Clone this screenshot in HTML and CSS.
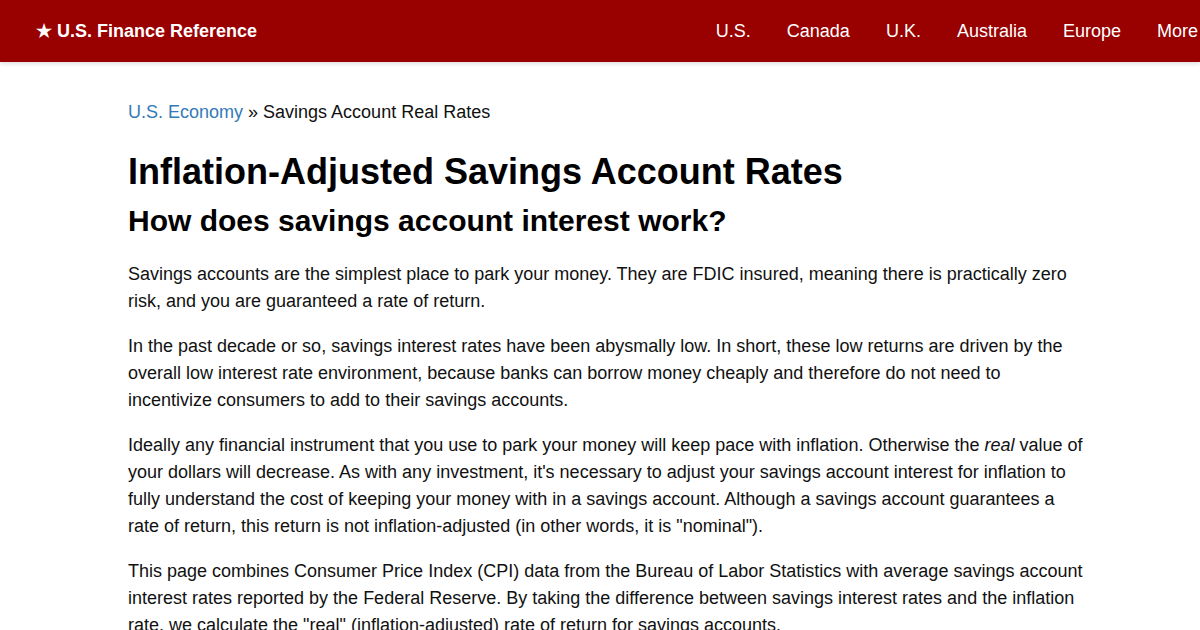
FILE: index.html
```html
<!DOCTYPE html>
<html lang="en">
<head>
<meta charset="utf-8">
<title>Inflation-Adjusted Savings Account Rates</title>
<link rel="stylesheet" href="styles.css">
</head>
<body>
<header class="topbar">
  <a class="brand" href="#">&#9733; U.S. Finance Reference</a>
  <nav class="nav">
    <a href="#">U.S.</a>
    <a href="#">Canada</a>
    <a href="#">U.K.</a>
    <a href="#">Australia</a>
    <a href="#">Europe</a>
    <a href="#">More</a>
  </nav>
</header>
<main class="content">
  <div class="breadcrumb"><a href="#">U.S. Economy</a> &raquo; Savings Account Real Rates</div>
  <h1>Inflation-Adjusted Savings Account Rates</h1>
  <h2>How does savings account interest work?</h2>
  <p>Savings accounts are the simplest place to park your money. They are FDIC insured, meaning there is practically zero risk, and you are guaranteed a rate of return.</p>
  <p>In the past decade or so, savings interest rates have been abysmally low. In short, these low returns are driven by the overall low interest rate environment, because banks can borrow money cheaply and therefore do not need to incentivize consumers to add to their savings accounts.</p>
  <p>Ideally any financial instrument that you use to park your money will keep pace with inflation. Otherwise the <em>real</em> value of your dollars will decrease. As with any investment, it's necessary to adjust your savings account interest for inflation to fully understand the cost of keeping your money with in a savings account. Although a savings account guarantees a rate of return, this return is not inflation-adjusted (in other words, it is "nominal").</p>
  <p>This page combines Consumer Price Index (CPI) data from the Bureau of Labor Statistics with average savings account interest rates reported by the Federal Reserve. By taking the difference between savings interest rates and the inflation rate, we calculate the "real" (inflation-adjusted) rate of return for savings accounts.</p>
</main>
</body>
</html>
```
FILE: styles.css
```css
html, body {
  margin: 0;
  padding: 0;
  overflow: hidden;
}
body {
  font-family: "Liberation Sans", Arial, sans-serif;
  color: #111;
  background: #fff;
  font-size: 18px;
  line-height: 27px;
}
.topbar {
  height: 62px;
  background: #990000;
  display: flex;
  align-items: center;
  padding-left: 36px;
  box-shadow: 0 2px 4px rgba(0,0,0,0.12);
  overflow: hidden;
  position: relative;
}
.brand {
  color: #fff;
  font-weight: bold;
  font-size: 18px;
  text-decoration: none;
  white-space: nowrap;
}
.nav {
  display: flex;
  margin-left: auto;
  margin-right: -16px;
  flex-shrink: 0;
}
.nav a {
  color: #fff;
  text-decoration: none;
  font-size: 18px;
  padding: 0 18px;
  white-space: nowrap;
}
.content {
  width: 960px;
  margin: 0 112px 0 128px;
  padding-top: 37px;
}
.breadcrumb {
  font-size: 18px;
  line-height: 27px;
}
.breadcrumb a {
  color: #337ab7;
  text-decoration: none;
}
h1 {
  font-size: 36px;
  line-height: 40px;
  margin: 26px 0 11px;
  color: #000;
}
h2 {
  font-size: 30px;
  line-height: 36px;
  margin: 0 0 22px;
  color: #000;
}
p {
  margin: 0 0 18px;
}
```
